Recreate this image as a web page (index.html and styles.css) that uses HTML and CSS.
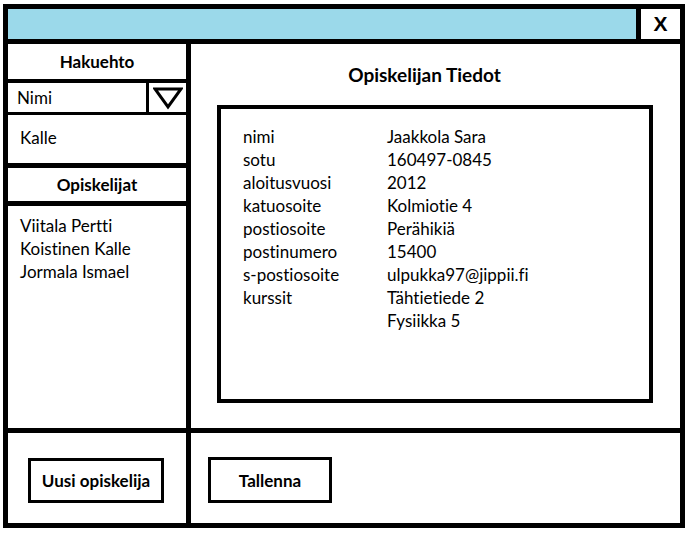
FILE: index.html
```html
<!DOCTYPE html>
<html lang="fi">
<head>
<meta charset="utf-8">
<title>Opiskelijat</title>
<link rel="stylesheet" href="styles.css">
</head>
<body>
<div class="window">
  <div class="titlebar">
    <div class="close">X</div>
  </div>
  <div class="main">
    <div class="left">
      <div class="lhead">Hakuehto</div>
      <div class="dropdown">
        <div class="dd-value">Nimi</div>
        <div class="dd-btn">
          <svg width="30" height="24" viewBox="0 0 30 24"><polygon points="2,3 28,3 15,21" fill="none" stroke="#000" stroke-width="3" stroke-linejoin="miter"/></svg>
        </div>
      </div>
      <div class="search">Kalle</div>
      <div class="lhead lhead2">Opiskelijat</div>
      <div class="list">
        <div>Viitala Pertti</div>
        <div>Koistinen Kalle</div>
        <div>Jormala Ismael</div>
      </div>
    </div>
    <div class="right">
      <div class="rhead">Opiskelijan Tiedot</div>
      <div class="infobox">
        <div class="info">
          <span>nimi</span><span>Jaakkola Sara</span>
          <span>sotu</span><span>160497-0845</span>
          <span>aloitusvuosi</span><span>2012</span>
          <span>katuosoite</span><span>Kolmiotie 4</span>
          <span>postiosoite</span><span>Perähikiä</span>
          <span>postinumero</span><span>15400</span>
          <span>s-postiosoite</span><span>ulpukka97@jippii.fi</span>
          <span>kurssit</span><span>Tähtietiede 2</span>
          <span></span><span>Fysiikka 5</span>
        </div>
      </div>
    </div>
    <div class="bleft">
      <div class="btn btn-new">Uusi opiskelija</div>
    </div>
    <div class="bright">
      <div class="btn btn-save">Tallenna</div>
    </div>
  </div>
</div>
</body>
</html>
```

FILE: styles.css
```css
* { box-sizing: border-box; }
html, body { margin: 0; padding: 0; background: #fff; }
body {
  font-family: Lato, "Open Sans", sans-serif;
  font-size: 17px;
  color: #000;
  font-variant-ligatures: none;
}
.window {
  margin: 4px 0 0 3px;
  width: 682px;
  height: 524px;
  border: 5px solid #000;
  display: flex;
  flex-direction: column;
}
.titlebar {
  height: 35px;
  background: #9bd9ea;
  border-bottom: 5px solid #000;
  display: flex;
  justify-content: flex-end;
  flex: none;
}
.close {
  width: 44px;
  background: #fff;
  border-left: 5px solid #000;
  font-weight: bold;
  font-size: 21px;
  display: flex;
  align-items: center;
  justify-content: center;
  font-family: "Liberation Sans", Arial, sans-serif;
}
.main {
  flex: 1;
  display: grid;
  grid-template-columns: 183px 1fr;
  grid-template-rows: 389px 1fr;
}
.left {
  border-right: 5px solid #000;
  border-bottom: 5px solid #000;
  display: flex;
  flex-direction: column;
}
.lhead {
  height: 39px;
  border-bottom: 4px solid #000;
  font-weight: bold;
  display: flex;
  align-items: center;
  justify-content: center;
  flex: none;
}
.lhead2 {
  height: 38px;
  border-bottom: 5px solid #000;
}
.dropdown {
  height: 32px;
  border-bottom: 3px solid #000;
  display: flex;
  flex: none;
}
.dd-value {
  width: 141px;
  border-right: 3px solid #000;
  padding-left: 9px;
  display: flex;
  align-items: center;
}
.dd-btn {
  flex: 1;
  display: flex;
  align-items: center;
  justify-content: center;
}
.search {
  height: 53px;
  border-bottom: 5px solid #000;
  padding: 0 0 3px 12px;
  display: flex;
  align-items: center;
  flex: none;
}
.list {
  flex: 1;
  padding: 8px 0 0 12px;
  line-height: 23px;
}
.right {
  border-bottom: 5px solid #000;
  padding: 19px 26px 0 26px;
}
.rhead {
  font-weight: bold;
  font-size: 19px;
  text-align: center;
  line-height: 23px;
  padding-right: 22px;
}
.infobox {
  margin-top: 19px;
  width: 436px;
  height: 298px;
  border: 4px solid #000;
  padding: 16px 0 0 22px;
}
.info {
  display: grid;
  grid-template-columns: 144px auto;
  line-height: 23px;
}
.bleft {
  border-right: 5px solid #000;
  padding: 25px 0 0 20px;
}
.bright {
  padding: 24px 0 0 17px;
}
.btn {
  border: 3px solid #000;
  font-weight: bold;
  display: flex;
  align-items: center;
  justify-content: center;
}
.btn-new { width: 136px; height: 45px; }
.btn-save { width: 124px; height: 46px; }
```
